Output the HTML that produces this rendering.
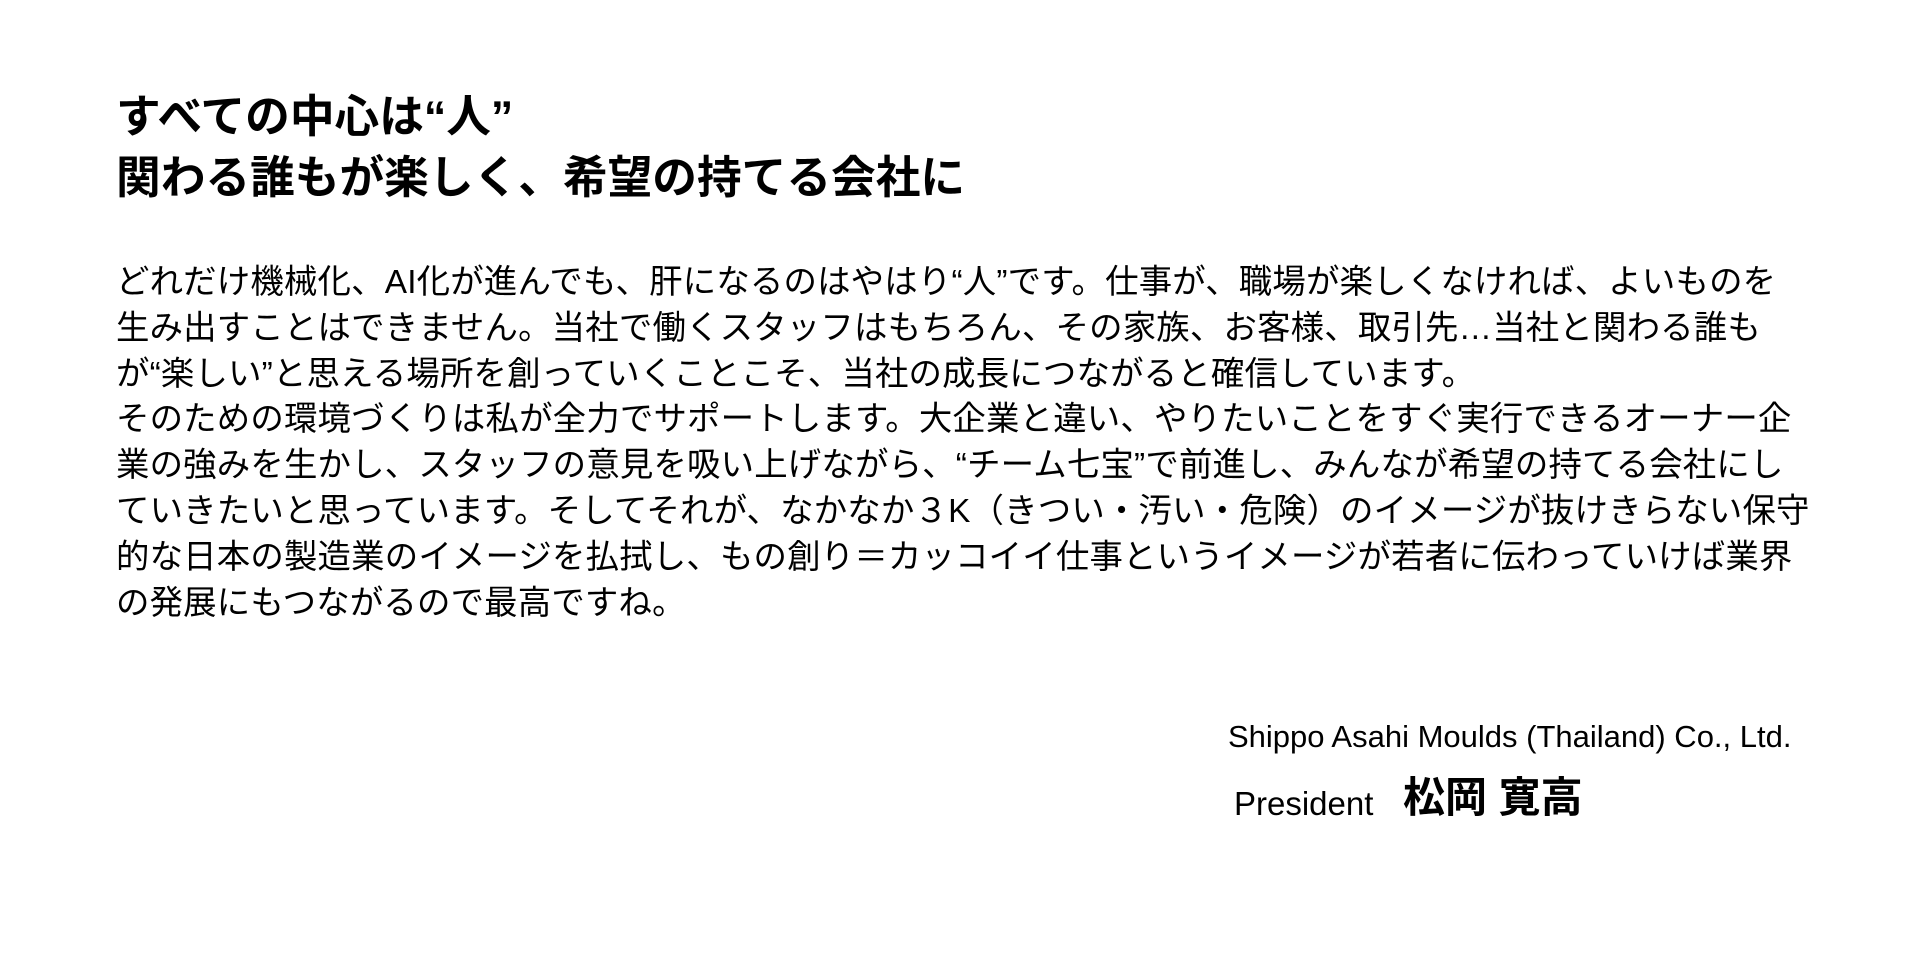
<!DOCTYPE html>
<html><head><meta charset="utf-8"><style>
html,body{margin:0;padding:0;background:#fff;width:1920px;height:960px;overflow:hidden}
body{font-family:"Liberation Sans","Noto Sans CJK JP",sans-serif;color:#000}
h1{position:absolute;left:116px;top:87px;margin:0;font-size:44.7px;line-height:61px;font-weight:700;white-space:nowrap}
.body{position:absolute;left:116px;top:260px;font-size:33.4px;line-height:45.8px;white-space:nowrap;letter-spacing:0.2px}
.co{position:absolute;left:1228px;top:719px;font-size:31px;white-space:nowrap}
.pr{position:absolute;left:1234px;top:785px;font-size:33px;white-space:nowrap}
.nm{position:absolute;left:1403px;top:764px;font-size:42px;font-weight:700;white-space:nowrap}
</style></head><body>
<h1>すべての中心は“人”<br>関わる誰もが楽しく、希望の持てる会社に</h1>
<div class="body">どれだけ機械化、AI化が進んでも、肝になるのはやはり“人”です。仕事が、職場が楽しくなければ、よいものを<br>生み出すことはできません。当社で働くスタッフはもちろん、その家族、お客様、取引先…当社と関わる誰も<br>が“楽しい”と思える場所を創っていくことこそ、当社の成長につながると確信しています。<br>そのための環境づくりは私が全力でサポートします。大企業と違い、やりたいことをすぐ実行できるオーナー企<br>業の強みを生かし、スタッフの意見を吸い上げながら、“チーム七宝”で前進し、みんなが希望の持てる会社にし<br>ていきたいと思っています。そしてそれが、なかなか３K（きつい・汚い・危険）のイメージが抜けきらない保守<br>的な日本の製造業のイメージを払拭し、もの創り＝カッコイイ仕事というイメージが若者に伝わっていけば業界<br>の発展にもつながるので最高ですね。</div>
<div class="co">Shippo Asahi Moulds (Thailand) Co., Ltd.</div>
<div class="pr">President</div>
<div class="nm">松岡 寛高</div>
</body></html>
